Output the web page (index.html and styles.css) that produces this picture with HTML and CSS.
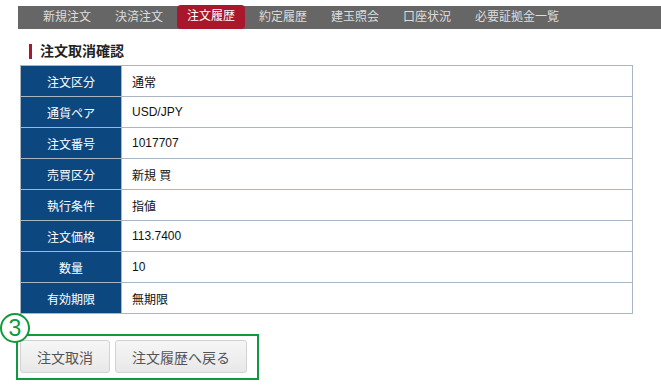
FILE: index.html
```html
<!DOCTYPE html>
<html lang="ja">
<head>
  <meta charset="UTF-8" />
  <title>注文取消確認</title>
  <link rel="stylesheet" href="styles.css">
</head>
<body>
  <nav class="tabs">
    <a href="#">新規注文</a>
    <a href="#">決済注文</a>
    <a href="#" class="active">注文履歴</a>
    <a href="#">約定履歴</a>
    <a href="#">建玉照会</a>
    <a href="#">口座状況</a>
    <a href="#">必要証拠金一覧</a>
  </nav>

  <h2 class="title">注文取消確認</h2>

  <table class="detail">
    <tr><th>注文区分</th><td>通常</td></tr>
    <tr><th>通貨ペア</th><td>USD/JPY</td></tr>
    <tr><th>注文番号</th><td>1017707</td></tr>
    <tr><th>売買区分</th><td>新規 買</td></tr>
    <tr><th>執行条件</th><td>指値</td></tr>
    <tr><th>注文価格</th><td>113.7400</td></tr>
    <tr><th>数量</th><td>10</td></tr>
    <tr><th>有効期限</th><td>無期限</td></tr>
  </table>

  <div class="actions">
    <span class="step">3</span>
    <button type="button">注文取消</button>
    <button type="button" class="wide">注文履歴へ戻る</button>
  </div>
</body>
</html>
```

FILE: styles.css
```css
:root {
  --navy: #0c477f;
  --line: #a9b5c1;
  --red: #a8172b;
  --green: #109a3d;
}
body {
  margin: 0;
  font-family: 'Liberation Sans', 'Noto Sans CJK JP', sans-serif;
  font-size: 12px;
  color: #111;
  background: #fff;
}
.tabs {
  display: flex;
  gap: 4px;
  margin: 6px 0 0 18px;
  padding-left: 15px;
  height: 23px;
  background: #666;
}
.tabs a {
  display: block;
  width: 48px;
  padding: 0 10px;
  line-height: 23px;
  color: #ddd;
  text-decoration: none;
  white-space: nowrap;
}
.tabs a.active {
  margin-top: -1px;
  background: var(--red);
  color: #fff;
  border-radius: 4px;
}
.title {
  margin: 15px 0 0 29px;
  padding-left: 8px;
  border-left: 3px solid var(--red);
  font-size: 14px;
  line-height: 15px;
  color: #222;
}
.detail {
  margin: 6px 0 0 20px;
  width: 613px;
  border-collapse: collapse;
}
.detail th, .detail td {
  height: 30px;
  padding: 0;
  border: 1px solid var(--line);
}
.detail th {
  width: 100px;
  background: var(--navy);
  color: #fff;
  font-weight: normal;
  text-align: center;
}
.detail td {
  padding-left: 10px;
}
.actions {
  position: relative;
  display: flex;
  gap: 5px;
  width: fit-content;
  margin: 20px 0 0 16px;
  padding: 4px 10px 5px 2px;
  border: 2px solid var(--green);
}
.actions button {
  width: 90px;
  height: 33px;
  padding: 0;
  border: 1px solid #d2d2d2;
  border-radius: 3px;
  background: linear-gradient(#f6f6f6, #e8e8e8);
  color: #555;
  font-family: inherit;
  font-size: 14px;
}
.actions button.wide {
  width: 132px;
}
.step {
  position: absolute;
  left: -18px;
  top: -23px;
  width: 26px;
  height: 26px;
  border: 2px solid var(--green);
  border-radius: 50%;
  background: #fff;
  color: var(--green);
  font-size: 23px;
  line-height: 26px;
  text-align: center;
}
```
